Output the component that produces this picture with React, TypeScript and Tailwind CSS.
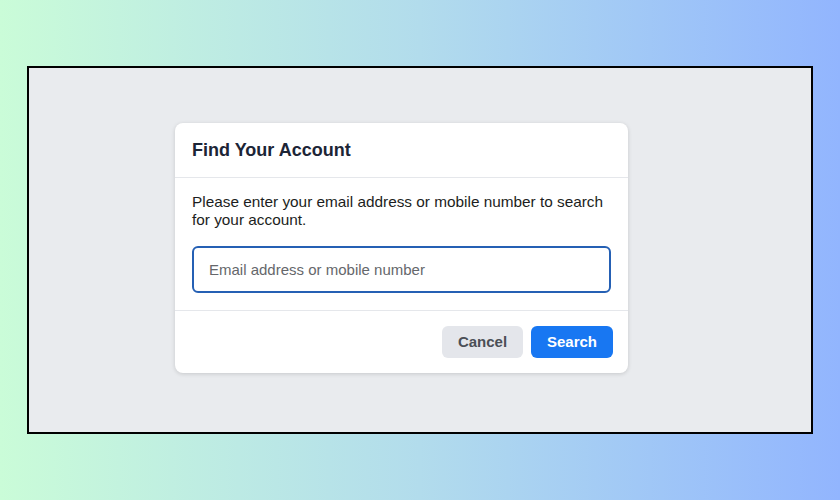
export default function App() {
  return (
    <div
      className="w-[840px] h-[500px] flex items-center justify-center bg-gradient-to-r from-[#cafcd8] via-[#b2dcec] to-[#92b5fe]"
      style={{ fontFamily: '"Liberation Sans", Arial, Helvetica, sans-serif' }}
    >
      <div className="w-[786px] h-[368px] border-2 border-black bg-[#e9ebee] pt-[55px] pl-[146px]">
        <div className="w-[453px] bg-white rounded-lg shadow-[0_1px_4px_rgba(0,0,0,0.15)]">
          <div className="h-[55px] px-[17px] flex items-center border-b border-[#e5e7eb]">
            <h2 className="text-[18px] font-bold text-[#1c2536] leading-none">Find Your Account</h2>
          </div>
          <div className="px-[17px] pt-[15px] pb-[17px]">
            <p className="text-[15.35px] leading-[18px] text-[#1c1e21] mb-[17px]">
              Please enter your email address or mobile number to search for your account.
            </p>
            <input
              type="text"
              placeholder="Email address or mobile number"
              className="w-full h-[47px] px-[15px] rounded-md border-2 border-[#2560b4] text-[15px] text-[#1c1e21] placeholder:text-[#65676b] outline-none"
            />
          </div>
          <div className="border-t border-[#e5e7eb] flex justify-end gap-2 px-[15px] pt-[15px] pb-[15px]">
            <button className="w-[81px] h-[32px] rounded-md bg-[#e4e6eb] text-[#4b4f56] text-[15px] font-bold">
              Cancel
            </button>
            <button className="w-[82px] h-[32px] rounded-md bg-[#1877f2] text-white text-[15px] font-bold">
              Search
            </button>
          </div>
        </div>
      </div>
    </div>
  );
}
